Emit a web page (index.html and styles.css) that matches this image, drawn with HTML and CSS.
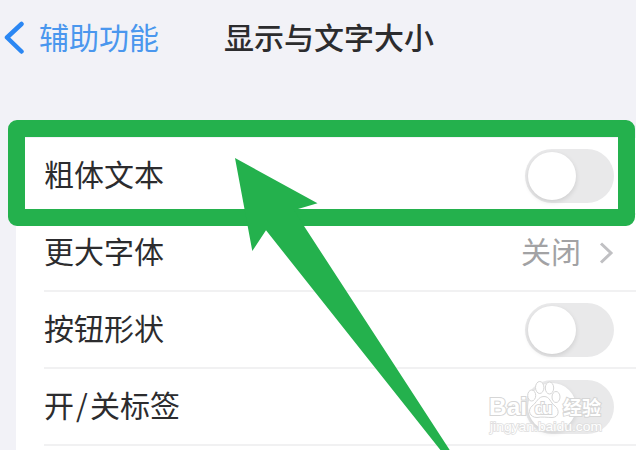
FILE: index.html
```html
<!DOCTYPE html>
<html lang="zh-CN">
<head>
  <meta charset="UTF-8">
  <meta name="viewport" content="width=device-width, initial-scale=1">
  <title>显示与文字大小</title>
  <link rel="stylesheet" href="styles.css">
</head>
<body>
  <header class="navbar">
    <a class="back">
      <svg class="back-icon" width="20" height="34" viewBox="0 0 20 34"><path d="M17.500 3 3 16.500l14.500 14"/></svg>
      <span class="text">辅助功能</span>
    </a>
    <h1 class="text">显示与文字大小</h1>
  </header>

  <main class="list">
    <div class="row">
      <span class="label text">粗体文本</span>
      <span class="toggle"></span>
    </div>
    <div class="row">
      <span class="label text">更大字体</span>
      <span class="value text">关闭</span>
      <svg class="chevron" width="16" height="24" viewBox="0 0 16 24"><path d="M3 2.500l10 9.500-10 9.500"/></svg>
    </div>
    <div class="row">
      <span class="label text">按钮形状</span>
      <span class="toggle"></span>
    </div>
    <div class="row">
      <span class="label text">开<span class="slash">/</span>关标签</span>
      <span class="toggle"></span>
    </div>
  </main>

  <!-- watermark -->
  <svg class="watermark" width="124" height="62" viewBox="0 0 124 62">
    <text class="brand" x="2" y="38.500" textLength="38" lengthAdjust="spacingAndGlyphs">Bai</text>
    <g class="paw">
      <ellipse cx="44.700" cy="19.500" rx="4" ry="5.500"/>
      <ellipse cx="52.700" cy="11.500" rx="4.200" ry="6"/>
      <ellipse cx="62.500" cy="12" rx="4.200" ry="6"/>
      <ellipse cx="69" cy="21" rx="4" ry="5.500"/>
      <path d="M57 20.500c6 0 6 6 11 9.500 5 4 4 11.500-3 11.500-5 0-10-1-15 0-7 0-10-7-5-11.500 5-3.500 6-9.500 12-9.500z"/>
    </g>
    <text class="du" x="47.500" y="38" textLength="18">du</text>
    <text class="cjk" x="76" y="38.500" textLength="38">经验</text>
    <text class="url" x="3" y="55" textLength="112" lengthAdjust="spacingAndGlyphs">jingyan.baidu.com</text>
  </svg>

  <!-- highlight box and arrow -->
  <div class="highlight"></div>
  <svg class="arrow" width="636" height="450" viewBox="0 0 636 450">
    <path d="M235 158l82.500 45.200L298 209h-4.500L304 226l147 226h-9L266 230.300 252.300 251z"/>
  </svg>
</body>
</html>
```
FILE: styles.css
```css
* {
  box-sizing: border-box;
}
body {
  position: relative;
  margin: 0;
  width: 636px;
  height: 450px;
  overflow: hidden;
  background: #f2f2f7;
  color: #2c2c2e;
  font-family: "Noto Sans CJK SC", sans-serif;
  font-size: 30px;
}
/* the font sits low in its line box */
.text {
  padding-bottom: 5px;
  line-height: 44px;
}
.navbar {
  display: flex;
  align-items: center;
  height: 76px;
  padding-left: 4px;
  margin-bottom: 62px;
}
.back {
  display: flex;
  align-items: center;
  width: 220px;
  color: #4a97ee;
}
.back-icon {
  margin-right: 15px;
}
.back-icon path {
  fill: none;
  stroke: #2b87f3;
  stroke-width: 4.500;
  stroke-linecap: round;
  stroke-linejoin: round;
}
h1 {
  margin: 0;
  font-size: 30px;
  font-weight: 500;
}
.list {
  margin-left: 16px;
  padding-left: 28px;
  background: #fff;
  height: 312px;
}
.row {
  display: flex;
  align-items: center;
  height: 77px;
  padding-right: 22px;
  border-bottom: 2px solid #f1f1f2;
}
.label {
  flex: 1;
}
.slash {
  display: inline-block;
  width: 16px;
  text-align: center;
}
.value {
  margin-right: 17px;
  color: #a2a2a4;
}
.chevron path {
  fill: none;
  stroke: #c0c0c3;
  stroke-width: 3;
}
.toggle {
  width: 89px;
  height: 54px;
  padding: 3px;
  border-radius: 27px;
  background: #e9e9ea;
}
.toggle::before {
  content: "";
  display: block;
  width: 48px;
  height: 48px;
  border-radius: 50%;
  background: #fff;
  box-shadow: 0 2px 5px rgba(0, 0, 0, 0.12);
}
.highlight {
  position: absolute;
  left: 8px;
  top: 120px;
  width: 627px;
  height: 106px;
  border: 17px solid #24b14d;
  border-radius: 9px;
}
.arrow {
  position: absolute;
  left: 0;
  top: 0;
  fill: #24b14d;
}
.watermark {
  position: absolute;
  left: 487px;
  top: 376px;
  fill: #fff;
  stroke: #d6d6d6;
  stroke-width: 1;
}
.watermark text {
  paint-order: stroke;
  stroke-width: 2;
}
.brand {
  font: bold 23px "Liberation Sans", sans-serif;
}
.watermark .du {
  font: bold 17px "Liberation Sans", sans-serif;
}
.cjk {
  font-size: 19px;
  font-weight: bold;
}
.watermark .url {
  font: 13px "Liberation Sans", sans-serif;
  stroke: #dedede;
  stroke-width: 1.500;
}
```
